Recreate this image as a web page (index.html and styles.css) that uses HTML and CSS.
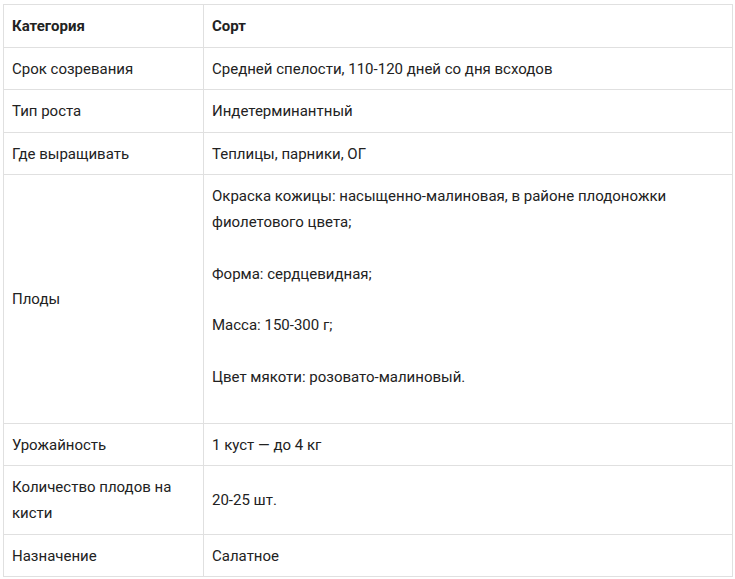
FILE: index.html
```html
<!DOCTYPE html>
<html lang="ru">
<head>
<meta charset="utf-8">
<link rel="stylesheet" href="styles.css">
</head>
<body>
<div class="wrap">
<table class="specs">
  <thead>
    <tr><th class="c1">Категория</th><th>Сорт</th></tr>
  </thead>
  <tbody>
    <tr><td>Срок созревания</td><td>Средней спелости, 110-120 дней со дня всходов</td></tr>
    <tr><td>Тип роста</td><td>Индетерминантный</td></tr>
    <tr><td>Где выращивать</td><td>Теплицы, парники, ОГ</td></tr>
    <tr><td>Плоды</td><td>
      <p>Окраска кожицы: насыщенно-малиновая, в районе плодоножки фиолетового цвета;</p>
      <p>Форма: сердцевидная;</p>
      <p>Масса: 150-300 г;</p>
      <p>Цвет мякоти: розовато-малиновый.</p>
    </td></tr>
    <tr><td>Урожайность</td><td>1 куст — до 4 кг</td></tr>
    <tr><td>Количество плодов на кисти</td><td>20-25 шт.</td></tr>
    <tr><td>Назначение</td><td>Салатное</td></tr>
  </tbody>
</table>
</div>
</body>
</html>
```
FILE: styles.css
```css
html, body {
  margin: 0;
  padding: 0;
  background: #fff;
}
.wrap {
  padding: 4px 2px 0 3px;
}
.specs {
  width: 730px;
  border-collapse: collapse;
  font-family: Roboto, "Liberation Sans", sans-serif;
  font-size: 15px;
  line-height: 26px;
  color: #222;
}
.specs th,
.specs td {
  border: 1px solid #e0e0e0;
  padding: 8px 8px 7.5px;
  text-align: left;
  vertical-align: middle;
}
.specs th {
  font-weight: 700;
}
.specs .c1 {
  width: 183px;
}
.specs p {
  margin: 0 0 25.5px 0;
}
```
